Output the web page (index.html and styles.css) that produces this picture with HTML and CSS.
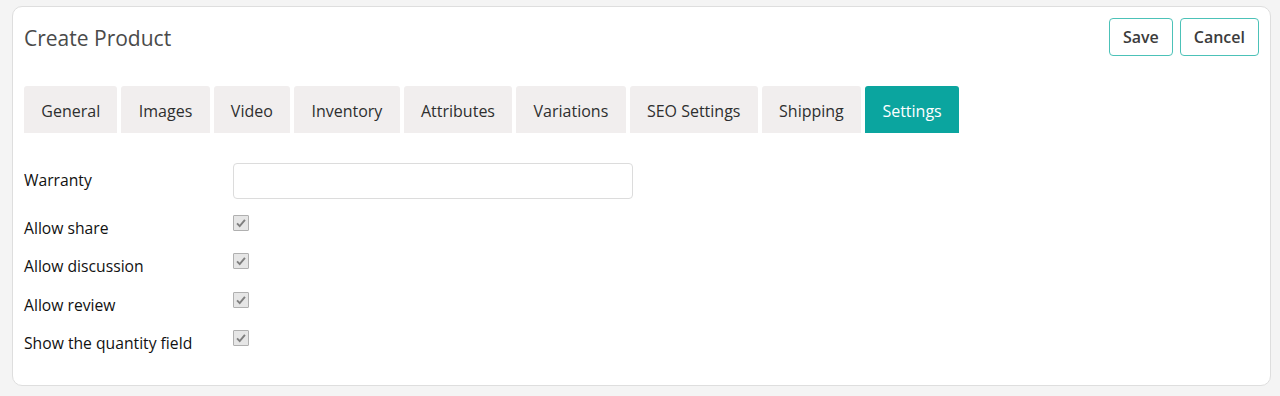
FILE: index.html
```html
<!DOCTYPE html>
<html lang="en">
<head>
<meta charset="utf-8">
<title>Create Product</title>
<link rel="stylesheet" href="styles.css">
</head>
<body>
<div class="card">
  <div class="card-header">
    <h1 class="title">Create Product</h1>
    <div class="actions">
      <button class="btn">Save</button>
      <button class="btn">Cancel</button>
    </div>
  </div>
  <div class="tabs">
    <div class="tab">General</div>
    <div class="tab">Images</div>
    <div class="tab">Video</div>
    <div class="tab">Inventory</div>
    <div class="tab">Attributes</div>
    <div class="tab">Variations</div>
    <div class="tab">SEO Settings</div>
    <div class="tab">Shipping</div>
    <div class="tab active">Settings</div>
  </div>
  <div class="form">
    <div class="row row-input">
      <label class="label">Warranty</label>
      <input class="input" type="text">
    </div>
    <div class="row row-check">
      <label class="label">Allow share</label>
      <span class="check"><svg viewBox="0 0 16 16"><path d="M3.5 8.5 L6.5 11.5 L12.5 4.5" /></svg></span>
    </div>
    <div class="row row-check">
      <label class="label">Allow discussion</label>
      <span class="check"><svg viewBox="0 0 16 16"><path d="M3.5 8.5 L6.5 11.5 L12.5 4.5" /></svg></span>
    </div>
    <div class="row row-check">
      <label class="label">Allow review</label>
      <span class="check"><svg viewBox="0 0 16 16"><path d="M3.5 8.5 L6.5 11.5 L12.5 4.5" /></svg></span>
    </div>
    <div class="row row-check">
      <label class="label">Show the quantity field</label>
      <span class="check"><svg viewBox="0 0 16 16"><path d="M3.5 8.5 L6.5 11.5 L12.5 4.5" /></svg></span>
    </div>
  </div>
</div>
</body>
</html>
```
FILE: styles.css
```css
* { box-sizing: border-box; }
html, body {
  margin: 0;
  background: #f4f4f4;
}
body {
  padding: 6px 9px 10px 12px;
  font-family: "Open Sans", "Liberation Sans", sans-serif;
  color: #222;
}
.card {
  background: #fff;
  border: 1px solid #dedede;
  border-radius: 10px;
  padding: 11px 11px 23px 11px;
  height: 380px;
}
.card-header {
  display: flex;
  justify-content: space-between;
  align-items: center;
  height: 38px;
}
.title {
  margin: 0;
  font-size: 21px;
  font-weight: 400;
  color: #4a4a4a;
  line-height: 28px;
  padding-top: 1px;
}
.actions {
  display: flex;
  gap: 7px;
}
.btn {
  font-family: "Open Sans", "Liberation Sans", sans-serif;
  font-size: 16px;
  font-weight: 600;
  color: #3c3c3c;
  background: #fff;
  border: 1px solid #4cc2b8;
  border-radius: 4px;
  height: 38px;
  padding: 0 13px;
}
.tabs {
  display: flex;
  gap: 4px;
  margin-top: 30px;
}
.tab {
  background: #f1eeee;
  color: #2e2e2e;
  font-size: 16px;
  height: 47px;
  line-height: 43px;
  padding: 4px 17.3px 0;
  border-radius: 3px 3px 0 0;
}
.tab.active {
  background: #0ba59f;
  color: #fff;
}
.form {
  padding-top: 30px;
}
.row {
  display: flex;
}
.label {
  width: 209px;
  font-size: 15.7px;
  color: #111;
}
.row-input {
  align-items: center;
  height: 36px;
  margin-bottom: 10px;
}
.row-input .label {
  margin-top: -2px;
}
.input {
  width: 400px;
  height: 36px;
  border: 1px solid #dcdcdc;
  border-radius: 4px;
  background: #fff;
}
.row-check {
  height: 38.33px;
  align-items: center;
}
.check {
  align-self: flex-start;
  margin-top: 6px;
  width: 16px;
  height: 16px;
  border: 1px solid #b0b0b0;
  background: #e6e6e6;
  border-radius: 1px;
  display: block;
}
.check svg {
  display: block;
  width: 14px;
  height: 14px;
  fill: none;
  stroke: #7f7f7f;
  stroke-width: 2.2;
}
```
